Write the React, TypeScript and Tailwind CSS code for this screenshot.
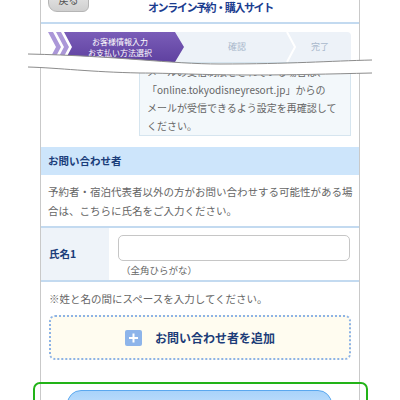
import React from "react";

const font = { fontFamily: '"Noto Sans CJK JP", "Noto Sans", sans-serif' };

function StepBar() {
  return (
    <div className="relative ml-[7px] mt-[8px] h-[30px] w-[303px]">
      <svg className="absolute inset-0" width="303" height="30" viewBox="0 0 303 30">
        <defs>
          <linearGradient id="pur" x1="0" y1="0" x2="0" y2="1">
            <stop offset="0" stopColor="#7a5db8" />
            <stop offset="1" stopColor="#5f41a0" />
          </linearGradient>
        </defs>
        <path d="M118,0 H299 Q303,0 303,4 V30 H118 Z" fill="#edf2f8" />
        <polygon points="0,0 5,0 13,15 5,30 0,30 8,15" fill="#ab97d8" />
        <polygon points="8,0 13,0 21,15 13,30 8,30 16,15" fill="#ab97d8" />
        <polygon points="16,0 127,0 136,15 127,30 16,30 24,15" fill="url(#pur)" />
        <polyline points="239,0 247,15 239,30" fill="none" stroke="#ffffff" strokeWidth="2" />
      </svg>
      <div className="relative flex h-full items-center">
        <div className="flex w-[144px] flex-col items-center text-[8px] leading-[11px] text-white">
          <span>お客様情報入力</span>
          <span>お支払い方法選択</span>
        </div>
        <div className="w-[90px] text-center text-[9px] text-[#a9b8cb]">確認</div>
        <div className="w-[69px] pl-[7px] text-center text-[9px] text-[#a9b8cb]">完了</div>
      </div>
    </div>
  );
}

function Tear() {
  return (
    <svg
      className="pointer-events-none absolute left-0 top-0"
      width="400"
      height="100"
      viewBox="0 0 400 100"
    >
      <path
        d="M28,54 C120,56 170,64 220,64 C290,64 330,61 372,60 L372,73 C330,74 290,75 255,75 C200,75 170,73 140,73 C90,72 60,68 28,67 Z"
        fill="#ffffff"
      />
      <path d="M28,54 C120,56 170,64 220,64 C290,64 330,61 372,60" fill="none" stroke="#8c8c8c" strokeWidth="1" />
      <path d="M28,67 C60,68 90,72 140,73 C170,73 200,75 255,75 C290,75 330,74 372,73" fill="none" stroke="#8c8c8c" strokeWidth="1" />
    </svg>
  );
}

export default function App() {
  return (
    <div className="relative h-[400px] w-[400px] overflow-hidden bg-white" style={font}>
      <div className="ml-[40px] h-[400px] w-[320px] border-x border-[#c9c9c9]">
        <div className="flex h-[24px] items-start border-b-2 border-[#c3daf0]">
          <div className="-mt-[14px] ml-[7px] flex h-[26px] w-[41px] items-center justify-center rounded-[6px] rounded-bl-[9px] border border-[#b5b5b5] bg-gradient-to-b from-[#eeeeee] to-[#cfcfcf] text-[10px] text-[#555]">
            戻る
          </div>
          <div className="ml-[59px] mt-[0px] text-[11px] font-bold leading-[14px] tracking-[-1.4px] text-[#1a3c8f]">
            オンライン予約・購入サイト
          </div>
        </div>

        <StepBar />

        <div className="ml-[98px] w-[212px] whitespace-nowrap border border-[#d6e5ef] bg-[#f3f8fb] pl-[7px] text-[10px] leading-[18px] text-[#666]">
          メールの受信制限をされている場合は、
          <br />
          「online.tokyodisneyresort.jp」からの
          <br />
          メールが受信できるよう設定を再確認して
          <br />
          ください。
        </div>

        <div className="mt-[11px] flex h-[28px] items-center bg-[#cde5fb] pl-[7px] text-[10.5px] font-bold text-[#1b3d7a]">
          お問い合わせ者
        </div>

        <div className="whitespace-nowrap px-[7px] pb-[6px] pt-[8px] text-[10.5px] leading-[18.5px] text-[#666]">
          予約者・宿泊代表者以外の方がお問い合わせする可能性がある場
          <br />
          合は、こちらに氏名をご入力ください。
        </div>

        <div className="flex h-[56px] border-y-2 border-[#c3daf0]">
          <div className="flex w-[68px] items-center bg-[#eef3f9] pl-[8px] text-[10.5px] font-bold text-[#1b3d7a]">
            氏名1
          </div>
          <div className="ml-[9px] pt-[7px]">
            <div className="h-[26px] w-[232px] rounded-[5px] border border-[#c6c6c6] bg-white" />
            <div className="mt-[3px] pl-[3px] text-[9.5px] leading-[12px] text-[#666]">（全角ひらがな）</div>
          </div>
        </div>

        <div className="pl-[8px] pt-[8px] text-[10.5px] leading-[18px] text-[#666]">
          ※姓と名の間にスペースを入力してください。
        </div>

        <div className="ml-[8px] mt-[7px] flex h-[45px] w-[302px] items-center justify-center gap-[13px] rounded-[6px] border-2 border-dotted border-[#8db3e6] bg-[#fffcf0]">
          <svg width="17" height="16" viewBox="0 0 17 16">
            <rect width="17" height="16" rx="2" fill="#8db4ea" />
            <path d="M8.5 3.5 V12.5 M4 8 H13" stroke="#ffffff" strokeWidth="2" />
          </svg>
          <span className="text-[12px] font-bold text-[#1d3c78]">お問い合わせ者を追加</span>
        </div>

        <div className="ml-[26px] mt-[30px] h-[30px] w-[265px] rounded-[14px] border border-[#5aa8ef] bg-gradient-to-b from-[#a9d3fa] to-[#cfe6fc]" />
      </div>

      <div className="absolute left-[33px] top-[382px] h-[40px] w-[335px] rounded-[7px] border-2 border-[#22b318]" />

      <Tear />
    </div>
  );
}
